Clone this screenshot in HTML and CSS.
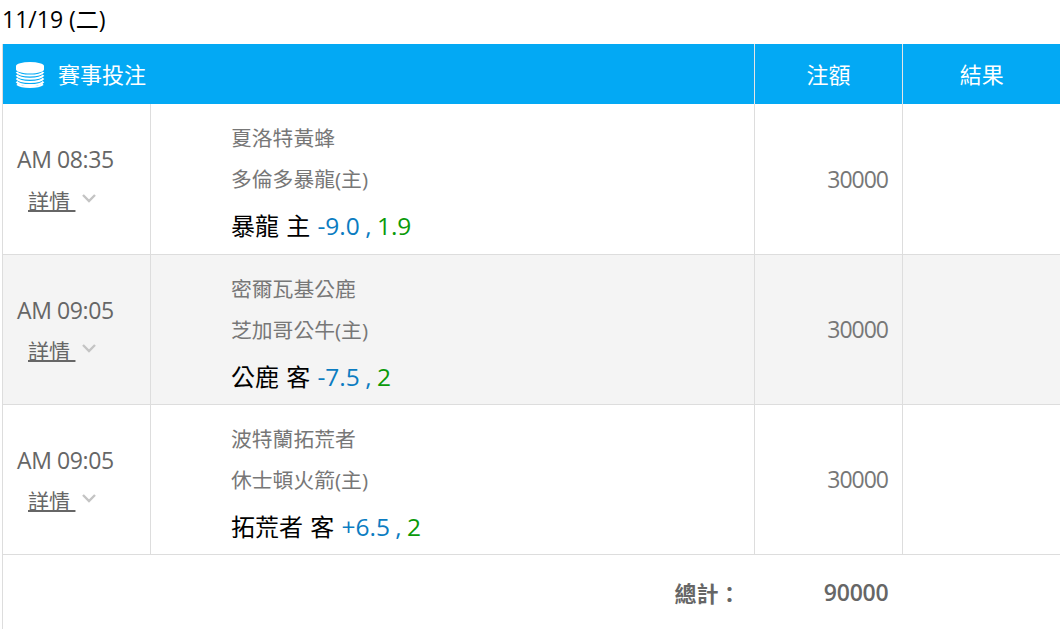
FILE: index.html
```html
<!DOCTYPE html>
<html lang="zh-Hant">
<head>
<meta charset="utf-8">
<title>賽事投注</title>
<link rel="stylesheet" href="styles.css">
</head>
<body>
<div class="date">11/19 (二)</div>
<table class="bets">
<colgroup><col class="c1"><col class="c2"><col class="c3"><col class="c4"></colgroup>
<thead>
<tr>
<th colspan="2" class="title"><div class="title-in"><svg class="coins" width="30" height="26" viewBox="0 0 30 26"><ellipse cx="15" cy="4" rx="14" ry="4" fill="#fff"/><path d="M1 4v3.500c0 2.200 6 4 14 4s14-1.800 14-4V4z" fill="#fff"/><g fill="none" stroke="#fff" stroke-width="2"><path d="M1.500 10c1.500 2 7 3.500 13.500 3.500S27 12 28.500 10"/><path d="M1.500 13.200c1.500 2 7 3.500 13.500 3.500s12-1.500 13.500-3.500"/><path d="M1.500 16.400c1.500 2 7 3.500 13.500 3.500s12-1.500 13.500-3.500"/><path d="M1.500 19.600c1.500 2 7 3.500 13.500 3.500s12-1.500 13.500-3.500"/><path d="M2 22.300c2 1.500 7 2.700 13 2.700s11-1.200 13-2.700"/></g></svg><span>賽事投注</span></div></th>
<th>注額</th>
<th class="last">結果</th>
</tr>
</thead>
<tbody>
<tr>
<td class="time"><div class="clock">AM 08:35</div><div class="more"><a class="link">詳情&nbsp;</a><svg class="chev" width="14" height="9" viewBox="0 0 14 9"><path d="M1 1l6 6 6-6" fill="none" stroke="#c4c4c4" stroke-width="2.400"/></svg></div></td>
<td class="match"><div class="team">夏洛特黃蜂</div><div class="team">多倫多暴龍(主)</div><div class="pick">暴龍 主 <span class="odds">-9.0 , </span><span class="rate">1.9</span></div></td>
<td class="amt">30000</td><td></td>
</tr>
<tr class="alt">
<td class="time"><div class="clock">AM 09:05</div><div class="more"><a class="link">詳情&nbsp;</a><svg class="chev" width="14" height="9" viewBox="0 0 14 9"><path d="M1 1l6 6 6-6" fill="none" stroke="#c4c4c4" stroke-width="2.400"/></svg></div></td>
<td class="match"><div class="team">密爾瓦基公鹿</div><div class="team">芝加哥公牛(主)</div><div class="pick">公鹿 客 <span class="odds">-7.5 , </span><span class="rate">2</span></div></td>
<td class="amt">30000</td><td></td>
</tr>
<tr>
<td class="time"><div class="clock">AM 09:05</div><div class="more"><a class="link">詳情&nbsp;</a><svg class="chev" width="14" height="9" viewBox="0 0 14 9"><path d="M1 1l6 6 6-6" fill="none" stroke="#c4c4c4" stroke-width="2.400"/></svg></div></td>
<td class="match"><div class="team">波特蘭拓荒者</div><div class="team">休士頓火箭(主)</div><div class="pick">拓荒者 客 <span class="odds">+6.5 , </span><span class="rate">2</span></div></td>
<td class="amt">30000</td><td></td>
</tr>
</tbody>
<tfoot>
<tr>
<td colspan="2" class="sum-label">總計：</td>
<td class="sum">90000</td><td></td>
</tr>
</tfoot>
</table>
</body>
</html>
```
FILE: styles.css
```css
html, body { margin: 0; padding: 0; background: #fff; overflow: hidden; }
body { padding-left: 2px; height: 630px; font-family: "Open Sans", "Noto Sans CJK TC", sans-serif; color: #666; }
.date { height: 44px; line-height: 38px; font-size: 23px; color: #000; }
.bets { border-collapse: collapse; table-layout: fixed; width: 1060px; border-left: 1px solid #ddd; }
.c1 { width: 148px; } .c2 { width: 604px; } .c3 { width: 148px; } .c4 { width: 160px; }
thead th, tbody td, tfoot td { box-sizing: border-box; }
thead th { height: 60px; padding: 0 0 2px; background: #03a9f4; color: #fff; font-size: 22px; font-weight: 400; border-left: 1px solid #e5e5e5; text-align: center; }
thead th.title { border-left: 0; text-align: left; }
thead th.last { padding-right: 2px; }
.title-in { display: flex; align-items: center; gap: 13px; padding-left: 12px; }
.coins { display: block; margin-top: 4px; }
tbody td { height: 150px; padding: 0; border-left: 1px solid #ddd; border-bottom: 1px solid #ddd; vertical-align: top; }
tbody tr.alt td { background: #f4f4f4; }
tbody td.time { border-left: 0; padding: 35px 0 0 14px; }
.clock { font-size: 23px; line-height: 41px; letter-spacing: -0.4px; }
.more { display: flex; align-items: center; gap: 7px; padding-left: 11px; height: 41px; }
.link { font-size: 21px; line-height: 28px; color: #666; text-decoration: underline; text-decoration-thickness: 2px; }
.chev { margin-top: -5px; }
tbody td.match { padding: 14px 0 0 80px; }
.team { font-size: 20.800px; line-height: 41px; color: #777; }
.pick { font-size: 24px; line-height: 52px; color: #000; word-spacing: 1px; }
.odds { font-size: 24.500px; color: #0b7cc1; word-spacing: -1px; }
.rate { font-size: 24.500px; color: #0a9a0a; }
tbody td.amt { font-size: 23px; vertical-align: middle; text-align: right; padding-right: 14px; color: #777; letter-spacing: -1px; }
tfoot td { height: 75px; padding: 0; }
.sum-label { text-align: right; font-size: 22px; font-weight: 600; padding-right: 14px; }
.sum { text-align: right; font-size: 23px; font-weight: 600; padding-right: 14px; letter-spacing: -0.200px; }
```
